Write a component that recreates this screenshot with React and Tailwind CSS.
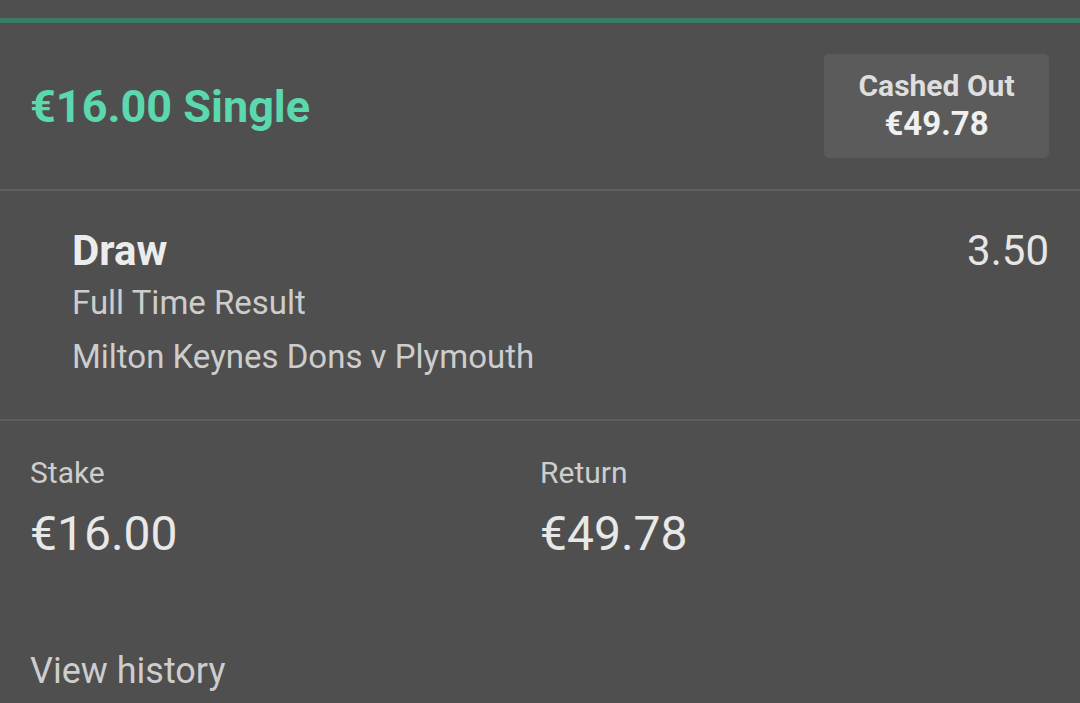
const App = () => (
  <div
    className="w-[1080px] h-[703px] overflow-hidden bg-[#4f4f4f]"
    style={{ fontFamily: 'Roboto, "Noto Sans", sans-serif' }}
  >
    <div className="h-[18px]" />
    <div className="h-[5px] bg-[#3a7c68]" />

    <div className="h-[166px] pl-[31px] pr-[31px] flex items-center justify-between">
      <h1 className="text-[45px] leading-[52px] font-bold text-[#5bd8ae] -ml-[1px] mt-[2px]">€16.00 Single</h1>
      <div className="w-[225px] h-[104px] rounded-[5px] bg-[#5b5b5b] flex flex-col items-center justify-center">
        <span className="text-[30px] leading-[36px] font-bold text-[#dedede]">Cashed Out</span>
        <span className="text-[33px] leading-[40px] font-bold text-[#f0f0f0]">€49.78</span>
      </div>
    </div>

    <div className="h-[2px] bg-[#5e5e5e]" />

    <div className="pl-[72px] pr-[31px] pt-[36px] pb-[35px] flex justify-between">
      <div className="flex flex-col">
        <span className="text-[42px] leading-[48px] font-bold text-[#ececec]">Draw</span>
        <span className="mt-[1px] text-[33px] leading-[54px] text-[#cdcdcd]">Full Time Result</span>
        <span className="text-[33px] leading-[54px] text-[#cdcdcd]">Milton Keynes Dons v Plymouth</span>
      </div>
      <span className="text-[42px] leading-[48px] text-[#e6e6e6]">3.50</span>
    </div>

    <div className="h-[2px] bg-[#5e5e5e]" />

    <div className="px-[30px] pt-[35px]">
      <div className="grid grid-cols-[510px_1fr]">
        <div className="flex flex-col">
          <span className="text-[30px] leading-[34px] text-[#cdcdcd]">Stake</span>
          <span className="mt-[16px] text-[48px] leading-[56px] text-[#e8e8e8]">€16.00</span>
        </div>
        <div className="flex flex-col">
          <span className="text-[30px] leading-[34px] text-[#cdcdcd]">Return</span>
          <span className="mt-[16px] text-[48px] leading-[56px] text-[#e8e8e8]">€49.78</span>
        </div>
      </div>
      <div className="mt-[88px] text-[36px] leading-[42px] text-[#cdcdcd]">View history</div>
    </div>
  </div>
);

export default App;
